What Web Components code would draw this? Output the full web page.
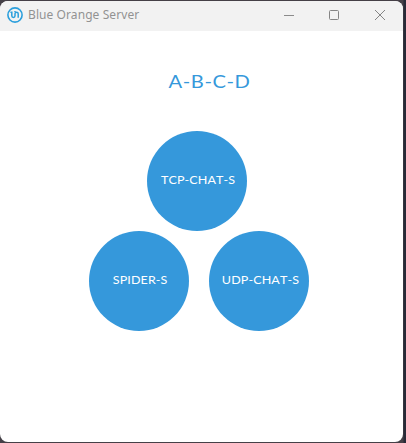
<!DOCTYPE html>
<html lang="en"><head><meta charset="utf-8"><title>Blue Orange Server</title>
<style>html,body{margin:0;width:406px;height:443px;overflow:hidden;background:linear-gradient(90deg,#454047 0 403px,#282a37 404px)}</style></head>
<body><app-window></app-window>
<script>
const define=(name,html)=>customElements.define(name,class extends HTMLElement{
  constructor(){super();this.attachShadow({mode:'open'}).innerHTML=html;}
});
define('app-logo',`<style>:host{display:block;width:16px;height:16px}svg{display:block}</style>
<svg width="16" height="16" viewBox="0 0 16 16" fill="none" stroke="#2b9fdc"><circle cx="8" cy="8" r="7.1" stroke-width="1.6"/><path d="M3.4 5.3h1.4v3.5a1.6 1.6 0 0 0 3.2 0V6.8a1.6 1.6 0 0 1 3.2 0v4M8 5V4" stroke-width="1.5"/></svg>`);
define('window-controls',`<style>:host{display:flex}span{display:grid;place-items:center;width:45px;height:28px}span:last-child{width:47px}svg{display:block}</style>
<span><svg width="12" height="12" fill="none" stroke="#8b8b8b"><path d="M1 6.5h10"/></svg></span>
<span><svg width="12" height="12" fill="none" stroke="#858585"><rect x="1.5" y="1.5" width="9" height="9" rx="1"/></svg></span>
<span><svg width="12" height="12" fill="none" stroke="#858585"><path d="M1 1l10 10M11 1L1 11"/></svg></span>`);
define('title-bar',`<style>:host{display:flex;align-items:center;height:30px;padding:0 0 2px 7px;background:#f2f2f2;box-sizing:border-box}
.t{margin-left:5px;font:12px/16px "Noto Sans",sans-serif;color:#929292;white-space:nowrap;letter-spacing:.08px;flex:1}window-controls{align-self:flex-start}</style>
<app-logo></app-logo><div class="t"><slot></slot></div><window-controls></window-controls>`);
define('round-button',`<style>:host{display:block}button{display:flex;align-items:center;justify-content:center;width:100px;height:100px;padding:0 0 2px 2px;border:0;border-radius:50%;background:#3598db;color:#fff;font:11.5px/16px Lato,sans-serif;letter-spacing:.1px;white-space:nowrap;font-kerning:none}span{transform:scaleX(1.09)}</style><button><span><slot></slot></span></button>`);
define('app-window',`<style>:host{display:block;width:403px;height:441px;margin-top:1px;border-radius:8px;overflow:hidden;background:#fff}
h1{margin:37px 0 0 16px;text-align:center;font:400 18px/26px Lato,sans-serif;font-kerning:none;letter-spacing:.5px;color:#3598db;transform:scaleX(1.12)}
main{display:grid;grid-template-columns:100px 100px;column-gap:20px;width:220px;margin:37px 0 0 89px}
round-button:first-child{grid-column:1/3;justify-self:center;margin-right:4px}</style>
<title-bar>Blue Orange Server</title-bar><h1>A-B-C-D</h1>
<main><round-button>TCP-CHAT-S</round-button><round-button>SPIDER-S</round-button><round-button>UDP-CHAT-S</round-button></main>`);
</script></body></html>
